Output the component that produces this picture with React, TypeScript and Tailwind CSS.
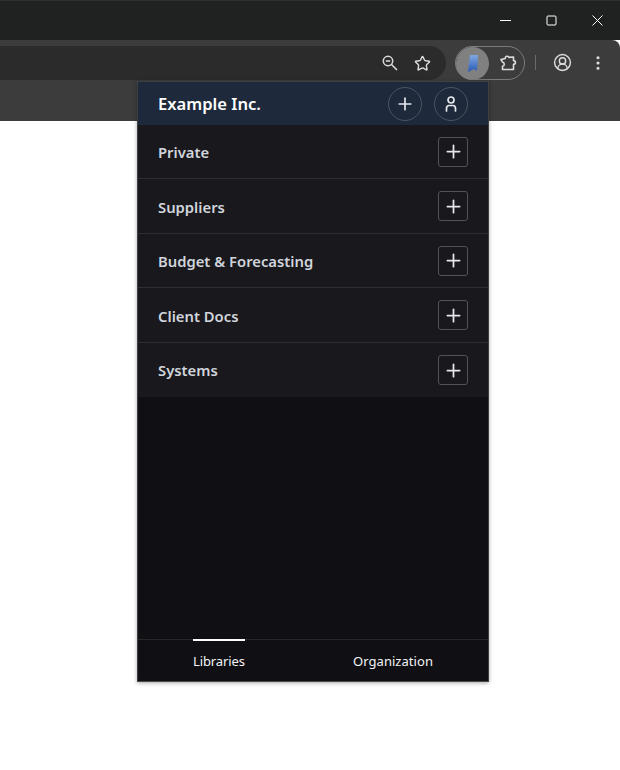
import { Star, CircleUserRound, EllipsisVertical, Plus } from "lucide-react";

const libraries = ["Private", "Suppliers", "Budget & Forecasting", "Client Docs", "Systems"];
const rowHeights = ["h-[54px]", "h-[55px]", "h-[54px]", "h-[55px]", "h-[54px]"];
const labelPads = ["pt-px", "pt-[2px]", "pt-px", "pt-[2px]", "pt-px"];

const ChromeBar = () => (
  <div className="flex flex-col">
    {/* Title bar */}
    <div className="h-10 bg-[#202221] border-t border-[#2e2f2f] flex items-center justify-end text-white">
      <div className="w-[46px] flex justify-center">
        <svg width="11" height="11" viewBox="0 0 11 11" stroke="currentColor"><path d="M0 5.5h11" /></svg>
      </div>
      <div className="w-[46px] flex justify-center">
        <svg width="11" height="11" viewBox="0 0 11 11" fill="none" stroke="currentColor"><rect x="1" y="1" width="9" height="9" rx="1" /></svg>
      </div>
      <div className="w-[46px] flex justify-center">
        <svg width="11" height="11" viewBox="0 0 11 11" stroke="currentColor"><path d="M0.5 0.5l10 10M10.5 0.5l-10 10" /></svg>
      </div>
    </div>
    {/* Toolbar */}
    <div className="h-[81px] bg-[#3c3c3c] rounded-tr-[8px] pt-[6px] flex items-start">
      <div className="w-[446px] h-[34px] bg-[#2b2b2b] rounded-r-[17px] flex items-center justify-end pr-[15px] gap-[16px] text-[#dcdcdc]">
        <svg width="16" height="16" viewBox="0 0 16 16" fill="none" stroke="currentColor" strokeWidth="1.5">
          <circle cx="6" cy="6" r="4.7" />
          <path d="M3.8 6h4.4M9.5 9.5l5.5 5.5" />
        </svg>
        <Star size={17} strokeWidth={2} />
      </div>
      <div className="ml-[9px] w-[70px] h-[34px] rounded-full border border-[#7b7b7b] flex items-center">
        <div className="w-[33px] h-[33px] rounded-full bg-[#808080] flex items-center justify-center">
          <svg width="10" height="17" viewBox="0 0 10 17">
            <defs>
              <linearGradient id="bm" x1="0" y1="0" x2="0" y2="1">
                <stop offset="0" stopColor="#7fa8e4" />
                <stop offset="1" stopColor="#2a5ab4" />
              </linearGradient>
            </defs>
            <path d="M2 0h8l-1 16-3-2-6 3z" fill="url(#bm)" />
          </svg>
        </div>
        <svg width="18" height="18" viewBox="0 0 18 18" fill="none" stroke="#dcdcdc" strokeWidth="1.6" strokeLinejoin="round" className="ml-[10px]">
          <path d="M2 5.5l4.2-1.1a2 2 0 0 1 3.8-1L14.5 3v3.6a1.9 1.9 0 0 1 0 3.8V15.5H3.5v-3.2a2.2 2.2 0 0 0 0-4.3z" />
        </svg>
      </div>
      <div className="ml-[10px] mt-[9px] w-px h-[15px] bg-[#6b6b6b]" />
      <CircleUserRound size={19} strokeWidth={1.8} className="ml-[17px] mt-[7px] text-[#dcdcdc]" />
      <EllipsisVertical size={18} strokeWidth={2.2} className="ml-[17px] mt-[8px] text-[#dcdcdc]" />
    </div>
  </div>
);

const App = () => {
  return (
    <div className="relative w-[620px] h-[770px] bg-white overflow-hidden font-['Noto_Sans',sans-serif]">
      <ChromeBar />

      {/* Extension popup */}
      <div className="absolute left-[137px] top-[81px] w-[352px] h-[601px] bg-[#101014] border border-[#3f4144] border-b-[#4a4a4a] shadow-[0_1px_4px_rgba(0,0,0,0.35)] flex flex-col">
        <div className="h-[43px] shrink-0 bg-[#1e293b] pl-5 pr-5 flex items-center justify-between">
          <span className="text-white text-[16.6px] font-semibold leading-none pt-px">Example Inc.</span>
          <div className="flex items-center gap-3">
            <button className="w-[34px] h-[34px] rounded-full border border-[#4b5563] flex items-center justify-center text-[#e5e7eb]">
              <Plus size={20} strokeWidth={2} />
            </button>
            <button className="w-[34px] h-[34px] rounded-full border border-[#4b5563] flex items-center justify-center text-[#e5e7eb]">
              <svg width="18" height="18" viewBox="0 0 18 18" fill="none" stroke="currentColor" strokeWidth="1.7" strokeLinecap="round">
                <circle cx="9" cy="5" r="3" />
                <path d="M4.5 16v-2.5c0-1.7 1.1-3 2.6-3h3.8c1.5 0 2.6 1.3 2.6 3V16" />
              </svg>
            </button>
          </div>
        </div>

        <div className="bg-[#18181d]">
          {libraries.map((name, i) => (
            <div
              key={name}
              className={`${rowHeights[i]} pl-5 pr-5 flex items-center justify-between ${i < libraries.length - 1 ? "border-b border-[#2d2d33]" : ""}`}
            >
              <span className={`text-[#d1d5db] text-[14.8px] font-semibold ${labelPads[i]}`}>{name}</span>
              <button className="w-[30px] h-[30px] rounded-[3px] border border-[#52525b] flex items-center justify-center text-[#e5e7eb]">
                <Plus size={21} strokeWidth={2} />
              </button>
            </div>
          ))}
        </div>

        <div className="flex-1" />

        {/* Bottom tabs */}
        <div className="h-[42px] shrink-0 border-t border-[#27272a] flex text-[13px] text-[#f3f4f6]">
          <div className="w-[55px]" />
          <div className="relative pt-[12px] w-[52px]">
            <div className="absolute left-0 right-0 -top-px h-[2px] bg-white" />
            <span className="tracking-[-0.1px]">Libraries</span>
          </div>
          <div className="ml-[108px] pt-[12px] tracking-[0.05px]">Organization</div>
        </div>
      </div>
    </div>
  );
};

export default App;
